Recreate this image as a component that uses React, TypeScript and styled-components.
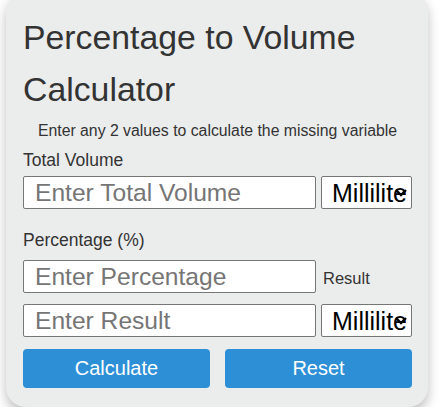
import React from "react";
import styled, { createGlobalStyle } from "styled-components";

const Global = createGlobalStyle`
  html, body { margin: 0; padding: 0; background: #ffffff; }
  body { font-family: "Liberation Sans", Arial, sans-serif; overflow: hidden; }
  * { box-sizing: border-box; }
`;

const Card = styled.div`
  width: 422px;
  margin: -8px 0 0 6px;
  padding: 19px 16px 19px 17px;
  background: #ebecec;
  border-radius: 20px;
  box-shadow: 0 6px 12px rgba(0, 0, 0, 0.25);
  color: #333333;
`;

const Title = styled.h1`
  margin: 0;
  font-size: 33.8px;
  line-height: 52px;
  font-weight: 400;
  color: #333333;
`;

const Subtitle = styled.p`
  margin: 7px 0 0;
  font-size: 15.8px;
  line-height: 18px;
  text-align: center;
  color: #333333;
`;

const Label = styled.label<{ $top: number; $bottom: number }>`
  display: block;
  margin: ${(p) => p.$top}px 0 ${(p) => p.$bottom}px;
  font-size: 17.5px;
  line-height: 20px;
  color: #333333;
`;

const Row = styled.div<{ $top?: number }>`
  display: flex;
  align-items: center;
  gap: 5px;
  margin-top: ${(p) => p.$top ?? 0}px;
`;

const TextInput = styled.input`
  width: 293px;
  height: 33px;
  flex: none;
  padding: 0 0 0 11px;
  border: 1px solid #767676;
  border-radius: 2px;
  background: #ffffff;
  font-family: "Liberation Sans", Arial, sans-serif;
  font-size: 24.6px;
  color: #222;
  outline: none;
  &::placeholder { color: #757575; }
`;

const SelectWrap = styled.div`
  position: relative;
  width: 91px;
  height: 33px;
  flex: none;
`;

const Select = styled.select`
  appearance: none;
  -webkit-appearance: none;
  width: 100%;
  height: 100%;
  padding: 0 5px 0 10px;
  border: 1px solid #767676;
  border-radius: 2px;
  background: #ffffff;
  font-family: "Liberation Sans", Arial, sans-serif;
  font-size: 25px;
  color: #000000;
  outline: none;
`;

const Arrow = styled.svg`
  position: absolute;
  right: 5px;
  top: 12px;
  z-index: 1;
  pointer-events: none;
`;

const SideLabel = styled.span`
  font-size: 16.5px;
  color: #333333;
  margin-left: 2px;
  padding-top: 3px;
`;

const Buttons = styled.div`
  display: grid;
  grid-template-columns: 187px 187px;
  column-gap: 15px;
  margin-top: 12px;
`;

const Button = styled.button`
  height: 39px;
  border: none;
  border-radius: 4px;
  background: #2d8fd6;
  color: #ffffff;
  font-family: "Liberation Sans", Arial, sans-serif;
  font-size: 20px;
  cursor: pointer;
`;

const UnitSelect = () => (
  <SelectWrap>
    <Select defaultValue="ml">
      <option value="ml">Milliliters</option>
      <option value="l">Liters</option>
    </Select>
    <Arrow width="12" height="9" viewBox="0 0 12 9">
      <path d="M1 2 L6 7 L11 2" fill="none" stroke="#000" strokeWidth="2.4" />
    </Arrow>
  </SelectWrap>
);

export default function App() {
  return (
    <>
      <Global />
      <Card>
        <Title>Percentage to Volume Calculator</Title>
        <Subtitle>Enter any 2 values to calculate the missing variable</Subtitle>
        <Label $top={10} $bottom={6}>Total Volume</Label>
        <Row>
          <TextInput placeholder="Enter Total Volume" />
          <UnitSelect />
        </Row>
        <Label $top={21} $bottom={10}>Percentage (%)</Label>
        <Row>
          <TextInput placeholder="Enter Percentage" />
          <SideLabel>Result</SideLabel>
        </Row>
        <Row $top={11}>
          <TextInput placeholder="Enter Result" />
          <UnitSelect />
        </Row>
        <Buttons>
          <Button>Calculate</Button>
          <Button>Reset</Button>
        </Buttons>
      </Card>
    </>
  );
}
